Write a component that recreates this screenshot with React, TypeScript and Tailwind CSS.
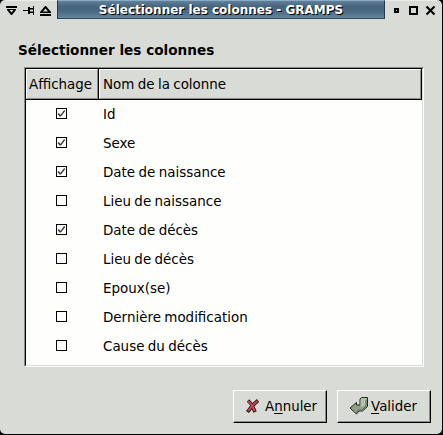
import type { ReactNode } from "react";

const columns = [
  { name: "Id", shown: true },
  { name: "Sexe", shown: true },
  { name: "Date de naissance", shown: true },
  { name: "Lieu de naissance", shown: false },
  { name: "Date de décès", shown: true },
  { name: "Lieu de décès", shown: false },
  { name: "Epoux(se)", shown: false },
  { name: "Dernière modification", shown: false },
  { name: "Cause du décès", shown: false },
];

function TitleBar() {
  return (
    <header className="flex h-[19px] shrink-0 items-start">
      <svg className="h-[19px] w-[57px] shrink-0" viewBox="0 0 57 19" fill="none">
        <path d="M5 0H57" stroke="#fff" strokeWidth="1" />
        <path d="M6 6h11v2H6zM7 9h9v1l-4 5h-1L7 10z" fill="#000" />
        <path d="M9.5 10h4l-2 2.5z" fill="#d9dbd6" />
        <path d="M23 10h5V7h2v1h3V6h1v9h-1v-2h-3v1h-2v-3h-5zM30 9.5v2h3v-2z" fill="#000" fillRule="evenodd" />
        <path d="M45 6h1l5 6v1H40v-1zM40 14h11v2H40z" fill="#000" />
        <path d="M45.5 8.5l2.5 3h-5z" fill="#d9dbd6" />
      </svg>
      <div className="flex h-[19px] w-[328px] items-start justify-center border border-t-[#88abc8] border-r-[#26394c] border-b-[#34495e] border-l-[#26394c] bg-[linear-gradient(to_bottom,#628199_0%,#45637c_35%,#4b6a83_65%,#6787a0_100%)]">
        <h1 className="whitespace-nowrap text-[12px] leading-[18px] font-bold text-white [text-shadow:1px_1px_0_#000]">Sélectionner les colonnes - GRAMPS</h1>
      </div>
      <svg className="h-[19px] w-[57px] shrink-0" viewBox="385 0 57 19" fill="none" stroke="#000" strokeWidth="2">
        <path d="M385 0H437" stroke="#fff" strokeWidth="1" />
        <path d="M395 9h3v3h-3z" shapeRendering="crispEdges" />
        <path d="M410 7h7v7h-7z" shapeRendering="crispEdges" />
        <path d="M426.5 6.5l8 8M434.5 6.5l-8 8" />
      </svg>
    </header>
  );
}

function CheckBox({ checked }: { checked: boolean }) {
  return (
    <span className="block size-[11px] border border-black bg-white">
      {checked && (
        <svg className="size-[9px]" viewBox="0 0 9 9" fill="none" stroke="#333">
          <path d="M1.2 4.5L3.5 7.2" strokeWidth="1.6" />
          <path d="M3.5 7.2L7.7 1.5" strokeWidth="1.3" />
        </svg>
      )}
    </span>
  );
}

function Button({ children }: { children: ReactNode }) {
  return (
    <button className="flex h-[33px] w-[94px] border border-t-white border-r-black border-b-black border-l-white text-[13.4px]">
      <span className="flex h-full w-full items-center border-r border-b border-[#8c8e89]">{children}</span>
    </button>
  );
}

export default function App() {
  return (
    <main className="flex h-[435px] w-[443px] flex-col overflow-hidden bg-black font-['DejaVu_Sans',sans-serif] text-black">
      <section className="flex h-[434px] w-[442px] flex-col rounded-[5px] bg-[#d9dbd6]">
        <TitleBar />
        <h2 className="mt-[21px] ml-[18px] h-[27px] text-[13.6px] leading-[20px] font-bold">Sélectionner les colonnes</h2>
        <div className="ml-[24px] h-[300px] w-[400px] border border-t-[#8c8e89] border-r-white border-b-white border-l-[#8c8e89]">
          <div className="h-full border border-t-black border-r-[#d9dbd6] border-b-[#d9dbd6] border-l-black bg-[#fefefc] text-[13.45px] [word-spacing:-0.9px]">
            <div className="flex h-[31px] border-b border-black bg-[#d9dbd6]">
              <div className="w-[73px] border-r border-black">
                <div className="h-full border border-t-white border-r-[#8c8e89] border-b-[#8c8e89] border-l-white pl-[2px] leading-[29px]">Affichage</div>
              </div>
              <div className="flex-1 border-r border-black">
                <div className="h-full border border-t-white border-r-[#8c8e89] border-b-[#8c8e89] border-l-white pl-[3px] leading-[29px]">Nom de la colonne</div>
              </div>
            </div>
            {columns.map((column) => (
              <div key={column.name} className="flex h-[29px] items-start">
                <div className="w-[77px] pt-[8px] pl-[30px]"><CheckBox checked={column.shown} /></div>
                <span className="leading-[29px]">{column.name}</span>
              </div>
            ))}
          </div>
        </div>
        <footer className="mt-[23px] ml-[233px] flex gap-[10px]">
          <Button>
            <svg className="ml-[11px] h-[16px] w-[15px]" viewBox="0 0 15 16" fill="none">
              <path d="M3 2.5Q7 6 10 14M13 2.5Q7 7 2.5 14" stroke="#1c1011" strokeWidth="3.6" />
              <path d="M3.3 3Q7 6.5 9.7 13.2M12.5 3Q7 7 3 13.2" stroke="#c24855" strokeWidth="2" />
            </svg>
            <span className="ml-[5px] pt-[2px]">A<u className="underline-offset-2">n</u>nuler</span>
          </Button>
          <Button>
            <svg className="ml-[11px] h-[20px] w-[20px]" viewBox="0 0 20 20">
              <path d="M1 12L7.5 6.5V9H11V3L13 1.5H18.5V10.5L13.5 15H10L7.5 18Z" fill="#91a087" stroke="#202820" />
              <path d="M11.6 3.4L13 2H18L16.6 3.5V9L14 10.5H11.6Z" fill="#b4c3ad" />
              <path d="M17 4V10L13 14H9L7.5 16.5" fill="none" stroke="#66775f" />
            </svg>
            <span className="ml-[2px] pt-[2px]"><u className="underline-offset-2">V</u>alider</span>
          </Button>
        </footer>
      </section>
    </main>
  );
}
